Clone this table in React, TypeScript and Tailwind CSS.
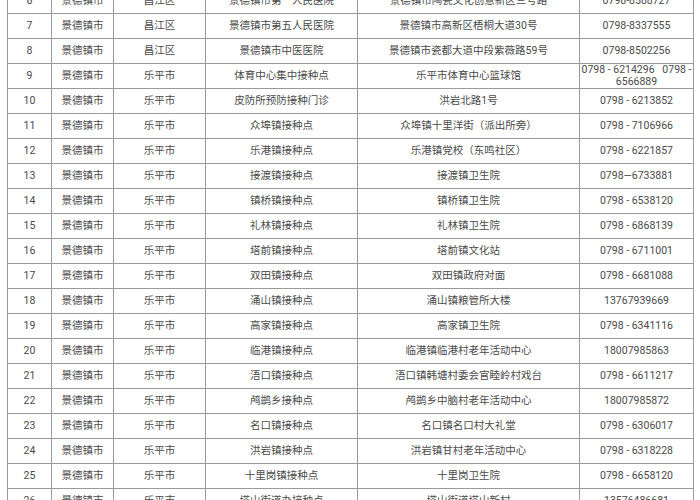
import React from 'react';

type Row = [number, string, string, string, string, string];

const rows: Row[] = [
  [6, '景德镇市', '昌江区', '景德镇市第一人民医院', '景德镇市陶瓷文化创意新区三号路', '0798-8588727'],
  [7, '景德镇市', '昌江区', '景德镇市第五人民医院', '景德镇市高新区梧桐大道30号', '0798-8337555'],
  [8, '景德镇市', '昌江区', '景德镇市中医医院', '景德镇市瓷都大道中段紫薇路59号', '0798-8502256'],
  [9, '景德镇市', '乐平市', '体育中心集中接种点', '乐平市体育中心篮球馆', '0798 - 6214296\u00a0\u00a0 0798 -\n6566889'],
  [10, '景德镇市', '乐平市', '皮防所预防接种门诊', '洪岩北路1号', '0798 - 6213852'],
  [11, '景德镇市', '乐平市', '众埠镇接种点', '众埠镇十里洋街（派出所旁）', '0798 - 7106966'],
  [12, '景德镇市', '乐平市', '乐港镇接种点', '乐港镇党校（东鸣社区）', '0798 - 6221857'],
  [13, '景德镇市', '乐平市', '接渡镇接种点', '接渡镇卫生院', '0798—6733881'],
  [14, '景德镇市', '乐平市', '镇桥镇接种点', '镇桥镇卫生院', '0798 - 6538120'],
  [15, '景德镇市', '乐平市', '礼林镇接种点', '礼林镇卫生院', '0798 - 6868139'],
  [16, '景德镇市', '乐平市', '塔前镇接种点', '塔前镇文化站', '0798 - 6711001'],
  [17, '景德镇市', '乐平市', '双田镇接种点', '双田镇政府对面', '0798 - 6681088'],
  [18, '景德镇市', '乐平市', '涌山镇接种点', '涌山镇粮管所大楼', '13767939669'],
  [19, '景德镇市', '乐平市', '高家镇接种点', '高家镇卫生院', '0798 - 6341116'],
  [20, '景德镇市', '乐平市', '临港镇接种点', '临港镇临港村老年活动中心', '18007985863'],
  [21, '景德镇市', '乐平市', '浯口镇接种点', '浯口镇韩塘村委会官睦岭村戏台', '0798 - 6611217'],
  [22, '景德镇市', '乐平市', '鸬鹚乡接种点', '鸬鹚乡中脑村老年活动中心', '18007985872'],
  [23, '景德镇市', '乐平市', '名口镇接种点', '名口镇名口村大礼堂', '0798 - 6306017'],
  [24, '景德镇市', '乐平市', '洪岩镇接种点', '洪岩镇甘村老年活动中心', '0798 - 6318228'],
  [25, '景德镇市', '乐平市', '十里岗镇接种点', '十里岗卫生院', '0798 - 6658120'],
  [26, '景德镇市', '乐平市', '塔山街道办接种点', '塔山街道塔山新村', '13576486681'],
];

const cell =
  'flex items-center justify-center text-center whitespace-pre-line border-r border-[#9a9a9a] leading-[12px] overflow-hidden';

const App = () => {
  return (
    <div
      className="w-[700px] h-[500px] overflow-hidden bg-white text-[#4a4a4a] text-[10.5px]"
      style={{ fontFamily: 'Roboto, "Noto Sans CJK SC", sans-serif' }}
    >
      <div className="ml-[7px] mt-[-12px] w-[687px] border-l border-t border-[#9a9a9a]">
        {rows.map((r) => (
          <div
            key={r[0]}
            className="grid grid-cols-[44px_62px_92px_152px_222px_114px] h-[25px] border-b border-[#9a9a9a]"
          >
            <div className={cell}>{r[0]}</div>
            <div className={cell}>{r[1]}</div>
            <div className={cell}>{r[2]}</div>
            <div className={cell}>{r[3]}</div>
            <div className={cell}>{r[4]}</div>
            <div className={cell}>{r[5]}</div>
          </div>
        ))}
      </div>
    </div>
  );
};

export default App;
